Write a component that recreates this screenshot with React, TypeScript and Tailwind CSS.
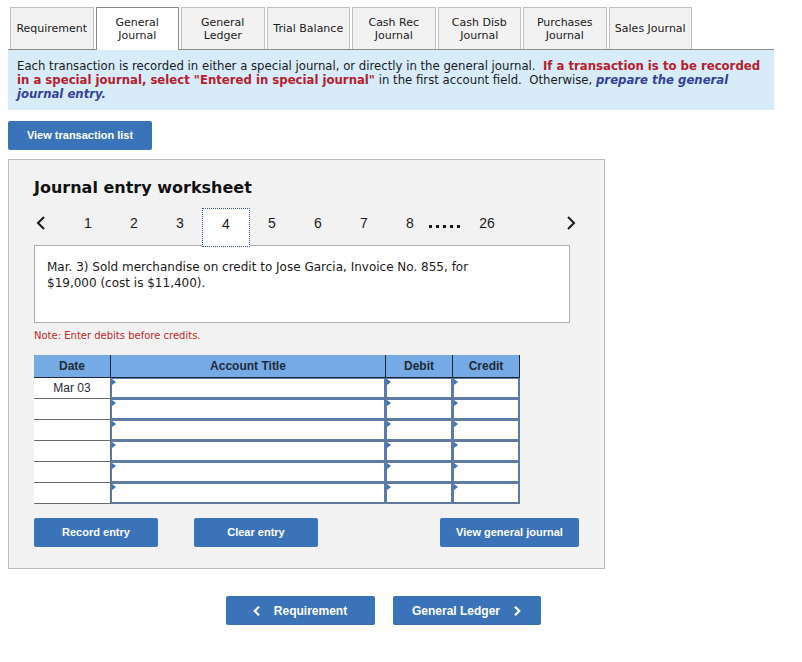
import { useState } from 'react'

const tabs = [
  'Requirement',
  'General Journal',
  'General Ledger',
  'Trial Balance',
  'Cash Rec Journal',
  'Cash Disb Journal',
  'Purchases Journal',
  'Sales Journal',
]

const pages = [1, 2, 3, 4, 5, 6, 7, 8]

const rows = ['Mar 03', '', '', '', '', '']

const columns = ['Account Title', 'Debit', 'Credit']

function Chevron({ direction, className }: { direction: 'left' | 'right'; className: string }) {
  return (
    <svg viewBox="0 0 9 14" fill="none" stroke="currentColor" className={className} aria-hidden="true">
      <path d={direction === 'left' ? 'M8 1 2 7 8 13' : 'M1 1 7 7 1 13'} />
    </svg>
  )
}

function ActionButton({ children, className }: { children: React.ReactNode; className: string }) {
  return (
    <button
      className={`h-[29px] rounded-xs bg-[#3b73b9] font-['Liberation_Sans',sans-serif] font-bold text-white hover:bg-[#2f62a3] ${className}`}
    >
      {children}
    </button>
  )
}

function TabBar() {
  const [active, setActive] = useState('General Journal')

  return (
    <nav className="border-b border-[#8c8c8c] px-0.5">
      <div className="grid h-[42px] max-w-[682px] grid-cols-8 gap-0.5">
        {tabs.map((tab) => (
          <button
            key={tab}
            onClick={() => setActive(tab)}
            className={
              tab === active
                ? '-mb-px border border-b-0 border-[#8c8c8c] bg-white px-1 text-[11px] leading-[13px]'
                : 'border border-b-0 border-[#c0c0c0] bg-[#f2f2f2] px-1 text-[11px] leading-[13px]'
            }
          >
            {tab}
          </button>
        ))}
      </div>
    </nav>
  )
}

function Pager() {
  const [page, setPage] = useState(4)

  return (
    <div className="flex h-[37px] items-stretch font-['Liberation_Sans',sans-serif] text-[14px] leading-[30px]">
      <button aria-label="Previous" className="w-[31px] pb-2 pl-0.5">
        <Chevron direction="left" className="h-[14px] w-[9px] stroke-2" />
      </button>
      {pages.map((n) => (
        <button
          key={n}
          onClick={() => setPage(n)}
          className={
            n === page
              ? 'relative z-10 -mx-px -mb-0.5 w-12 border border-dotted border-[#2f528c] bg-white pb-2.5'
              : 'w-[46px] pb-2'
          }
        >
          {n}
        </button>
      ))}
      <span className="-ml-1 flex w-[31px] items-center justify-between" aria-hidden="true">
        {[0, 1, 2, 3, 4].map((dot) => (
          <i key={dot} className="size-[3px] bg-[#1a1a1a]" />
        ))}
      </span>
      <button className="ml-1 w-[46px] pb-2" onClick={() => setPage(26)}>
        26
      </button>
      <button aria-label="Next" className="-mr-2 ml-auto pr-0.5 pb-2">
        <Chevron direction="right" className="h-[14px] w-[9px] stroke-2" />
      </button>
    </div>
  )
}

function EntryTable() {
  return (
    <table className="w-[486px] table-fixed border-separate border-spacing-0 font-['Liberation_Sans',sans-serif] text-xs text-[#1f2a38]">
      <colgroup>
        <col className="w-[77px]" />
        <col />
        <col className="w-[67px]" />
        <col className="w-[67px]" />
      </colgroup>
      <thead>
        <tr className="h-[23px] bg-[#76aae5]">
          <th className="border-r border-b border-[#1c2530] p-0">Date</th>
          {columns.map((column) => (
            <th key={column} className="border-r border-b border-[#1c2530] p-0">
              {column}
            </th>
          ))}
        </tr>
      </thead>
      <tbody>
        {rows.map((date, i) => (
          <tr key={i} className="h-[21px]">
            <td className="border-r border-b border-[#666a72] bg-white p-0 text-center">{date}</td>
            {columns.map((column) => (
              <td key={column} className="relative border-r border-b border-[#66789a] bg-white p-0">
                <input
                  aria-label={`${column}, row ${i + 1}`}
                  className="block h-5 w-full border border-[#5b7caa] bg-white px-1 text-xs outline-none"
                />
                <svg viewBox="0 0 4 6" className="absolute top-px left-px h-1.5 w-1" aria-hidden="true">
                  <path d="M0 0 4 3 0 6z" fill="#3b73b9" />
                </svg>
              </td>
            ))}
          </tr>
        ))}
      </tbody>
    </table>
  )
}

export default function App() {
  return (
    <div className="max-w-[782px] bg-white px-2 pt-[7px] pb-9 font-['DejaVu_Sans',sans-serif] text-[#1a1a1a]">
      <TabBar />

      {/* Instructions */}
      <p className="bg-[#d7ebf9] px-[9px] pt-[9px] pb-[9px] font-['DejaVu_Sans_Condensed','DejaVu_Sans',sans-serif] text-[13px] leading-[14px]">
        Each transaction is recorded in either a special journal, or directly in the general journal.&nbsp;{' '}
        <b className="text-[#b3202c]">
          If a transaction is to be recorded in a special journal, select "Entered in special journal"
        </b>{' '}
        in the first account field.&nbsp; Otherwise,{' '}
        <b className="text-[#33419a] italic">prepare the general journal entry.</b>
      </p>

      <ActionButton className="mt-[11px] w-36 text-[11px]">View transaction list</ActionButton>

      {/* Worksheet */}
      <section className="mt-[9px] max-w-[597px] border border-[#bcbcbc] bg-[#f2f2f2] px-[25px] pt-4 pb-[21px]">
        <h1 className="mb-2 text-base leading-6 font-bold text-[#111]">Journal entry worksheet</h1>

        <div className="max-w-[536px]">
          <Pager />
          <div className="h-[78px] border border-[#b0b0b0] bg-white px-3 py-[13px] text-xs leading-4">
            <p className="max-w-[440px]">
              Mar. 3) Sold merchandise on credit to Jose Garcia, Invoice No. 855, for $19,000 (cost is $11,400).
            </p>
          </div>
        </div>

        <p className="mt-[5px] mb-[11px] text-[10px] leading-4 text-[#c0282d]">Note: Enter debits before credits.</p>

        <EntryTable />

        <div className="mt-3.5 flex">
          <ActionButton className="w-[124px] text-[11px]">Record entry</ActionButton>
          <ActionButton className="ml-9 w-[124px] text-[11px]">Clear entry</ActionButton>
          <ActionButton className="ml-auto w-[139px] text-[11px]">View general journal</ActionButton>
        </div>
      </section>

      <div className="mt-[27px] flex justify-center gap-[18px] pr-4">
        <ActionButton className="flex w-[149px] items-center justify-center gap-3.5 text-xs">
          <Chevron direction="left" className="h-2.5 w-[7px] stroke-3" />
          Requirement
        </ActionButton>
        <ActionButton className="flex w-[148px] items-center justify-center gap-3.5 text-xs">
          General Ledger
          <Chevron direction="right" className="h-2.5 w-[7px] stroke-3" />
        </ActionButton>
      </div>
    </div>
  )
}
